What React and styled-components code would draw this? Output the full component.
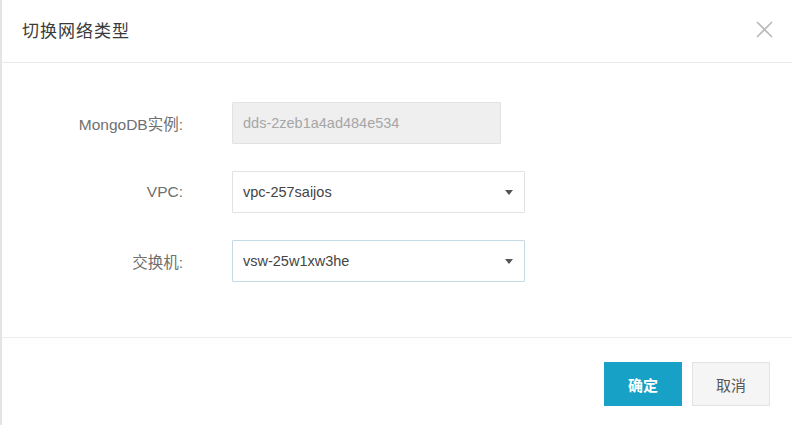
import styled, { createGlobalStyle } from "styled-components";

const GlobalStyle = createGlobalStyle`
  body {
    margin: 0;
    background: #ffffff;
    font-family: "Liberation Sans", "Noto Sans CJK SC", Arial, sans-serif;
  }
`;

const Dialog = styled.div`
  width: 792px;
  height: 425px;
  box-sizing: border-box;
  border-left: 2px solid #e4e4e4;
  background: #ffffff;
  display: flex;
  flex-direction: column;
`;

const Header = styled.div`
  height: 63px;
  box-sizing: border-box;
  border-bottom: 1px solid #e9e9e9;
  display: flex;
  align-items: center;
  justify-content: space-between;
  padding: 0 18px 4px 20px;
`;

const Title = styled.h1`
  margin: 0;
  font-size: 17px;
  font-weight: 400;
  color: #3a3a3a;
  letter-spacing: 1px;
`;

const CloseButton = styled.button`
  border: none;
  background: none;
  padding: 0;
  width: 19px;
  height: 19px;
  cursor: pointer;
  display: flex;
`;

const Body = styled.div`
  height: 275px;
  box-sizing: border-box;
  border-bottom: 1px solid #ececec;
  padding-top: 39px;
  display: flex;
  flex-direction: column;
  gap: 27px;
`;

const Row = styled.div`
  display: grid;
  grid-template-columns: 181px 1fr;
  column-gap: 49px;
  align-items: center;
`;

const Label = styled.label`
  text-align: right;
  font-size: 15.5px;
  color: #707070;
`;

const Field = styled.div`
  width: ${(p) => p.$width}px;
  height: 42px;
  box-sizing: border-box;
  border: 1px solid ${(p) => (p.$focused ? "#c4d9e6" : "#e2e2e2")};
  background: ${(p) => (p.$disabled ? "#efefef" : "#ffffff")};
  border-radius: 1px;
  display: flex;
  align-items: center;
  justify-content: space-between;
  padding: 0 10px 0 10px;
  font-size: 14.5px;
  color: ${(p) => (p.$disabled ? "#a6a6a6" : "#444444")};
`;

const Caret = styled.span`
  width: 0;
  height: 0;
  border-left: 4px solid transparent;
  border-right: 4px solid transparent;
  border-top: 5px solid #555555;
  margin-right: 1px;
`;

const Footer = styled.div`
  flex: 1;
  display: flex;
  justify-content: flex-end;
  align-items: flex-start;
  gap: 10px;
  padding: 24px 22px 0 0;
`;

const Button = styled.button`
  width: 78px;
  height: 44px;
  box-sizing: border-box;
  border: 1px solid ${(p) => (p.$primary ? "#1aa2c8" : "#e3e3e3")};
  background: ${(p) => (p.$primary ? "#17a1c6" : "#f5f5f5")};
  color: ${(p) => (p.$primary ? "#ffffff" : "#555555")};
  font-family: inherit;
  font-size: 15px;
  font-weight: ${(p) => (p.$primary ? 700 : 400)};
  cursor: pointer;
`;

const fields = [
  { label: "MongoDB实例:", value: "dds-2zeb1a4ad484e534", width: 269, disabled: true },
  { label: "VPC:", value: "vpc-257saijos", width: 293, select: true },
  { label: "交换机:", value: "vsw-25w1xw3he", width: 293, select: true, focused: true },
];

const App = () => {
  return (
    <>
      <GlobalStyle />
      <Dialog>
        <Header>
          <Title>切换网络类型</Title>
          <CloseButton aria-label="close">
            <svg width="19" height="19" viewBox="0 0 19 19">
              <path d="M2 2 L17 17 M17 2 L2 17" stroke="#b9b9b9" strokeWidth="1.6" />
            </svg>
          </CloseButton>
        </Header>
        <Body>
          {fields.map((f) => (
            <Row key={f.label}>
              <Label>{f.label}</Label>
              <Field $width={f.width} $disabled={f.disabled} $focused={f.focused}>
                <span>{f.value}</span>
                {f.select && <Caret />}
              </Field>
            </Row>
          ))}
        </Body>
        <Footer>
          <Button $primary>确定</Button>
          <Button>取消</Button>
        </Footer>
      </Dialog>
    </>
  );
};

export default App;
